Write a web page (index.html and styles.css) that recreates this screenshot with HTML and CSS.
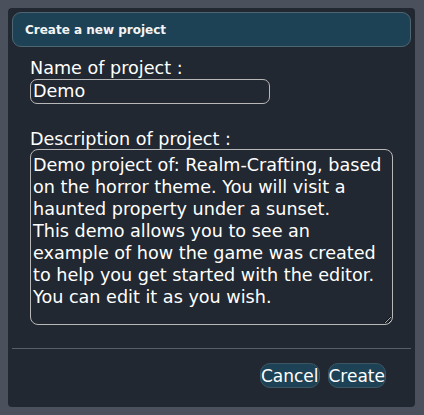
FILE: index.html
```html
<!DOCTYPE html>
<html lang="en">
<head>
  <meta charset="UTF-8">
  <meta name="viewport" content="width=device-width, initial-scale=1.0">
  <title>Create a new project</title>
  <link rel="stylesheet" href="styles.css">
</head>
<body>
  <div class="dialog">
    <div class="dialog-header">Create a new project</div>

    <div class="dialog-body">
      <label class="field-label" for="projectName">Name of project :</label>
      <input type="text" id="projectName" class="name-input" value="Demo">

      <label class="field-label desc-label" for="projectDesc">Description of project :</label>
      <textarea id="projectDesc" class="desc-input">Demo project of: Realm-Crafting, based on the horror theme. You will visit a haunted property under a sunset.
This demo allows you to see an example of how the game was created to help you get started with the editor.
You can edit it as you wish.</textarea>
    </div>

    <hr class="separator">

    <div class="dialog-footer">
      <button class="dialog-btn">Cancel</button>
      <button class="dialog-btn">Create</button>
    </div>
  </div>
</body>
</html>
```

FILE: styles.css
```css
* {
  box-sizing: border-box;
}

body {
  margin: 0;
  padding: 8px;
  background: #4b515c;
  font-family: 'DejaVu Sans', sans-serif;
  color: #fff;
}

.dialog {
  width: 407px;
  background: #222831;
  border-radius: 4px;
  padding: 4px;
}

.dialog-header {
  height: 35px;
  display: flex;
  align-items: center;
  padding-left: 12px;
  background: #1e4255;
  border: 1px solid #4e6672;
  border-radius: 9px;
  font-size: 12px;
  font-weight: bold;
  color: #f4f4f4;
}

.dialog-body {
  display: flex;
  flex-direction: column;
  align-items: flex-start;
  padding: 11px 0 0 18px;
}

.field-label {
  font-size: 17.6px;
  line-height: 20.5px;
}

.desc-label {
  margin-top: 25px;
}

.name-input, .desc-input {
  font-family: 'DejaVu Sans', sans-serif;
  font-size: 17.6px;
  color: #fff;
  background: #222831;
  border: 1px solid #b8b8b8;
  outline: none;
}

.name-input {
  width: 240px;
  height: 25px;
  padding: 1px 2px;
  border-radius: 7px;
}

.desc-input {
  width: 363px;
  height: 176px;
  padding: 4px 2px;
  line-height: 22px;
  border-radius: 8px;
  resize: both;
}

.separator {
  margin: 23px 0 0;
  border: none;
  border-top: 1px solid #585e66;
}

.dialog-footer {
  display: flex;
  justify-content: flex-end;
  gap: 8px;
  padding: 14px 25px 15px 0;
}

.dialog-btn {
  height: 25px;
  padding: 0;
  font-family: 'DejaVu Sans', sans-serif;
  font-size: 17px;
  color: #fff;
  background: #1e4255;
  border: 1px solid #3c5664;
  border-radius: 10px;
  cursor: pointer;
}
```
